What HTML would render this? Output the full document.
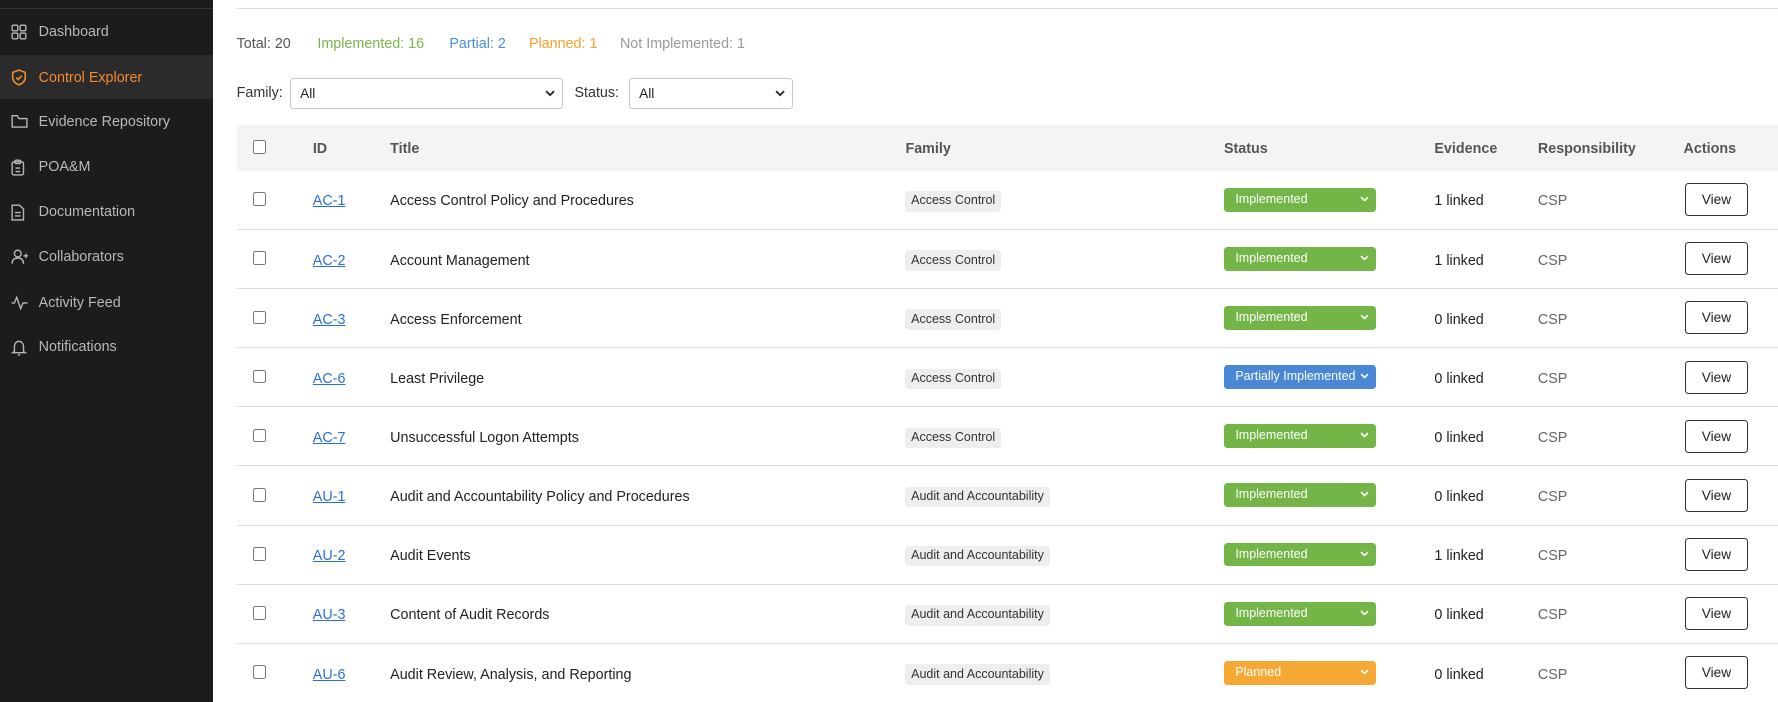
<!DOCTYPE html>
<html><head><meta charset="utf-8"><style>
*{box-sizing:border-box;margin:0;padding:0}
html,body{width:1778px;height:702px;overflow:hidden;background:#fff;font-family:"Liberation Sans",sans-serif}
#w{zoom:1.1375;width:1563px;height:618px;position:relative;overflow:hidden}
.sb{position:absolute;left:0;top:0;width:187px;height:618px;background:#1c1c1c}
.sb .tl{position:absolute;left:0;top:7px;width:187px;height:1px;background:#333}
.it{position:absolute;left:0;width:187px;height:39px;color:#b8b8b8;font-size:12.6px;line-height:41px;padding-left:34px}
.it svg{position:absolute;left:10px;top:13px}
.it.on{background:#2b2b2b;color:#f28a2e}
.a{position:absolute;white-space:nowrap}
.sel{position:absolute;height:27px;border:1px solid #c8c8c8;border-radius:3px;font-size:12px;line-height:25px;padding-left:8px;color:#222;background:#fff}
.sel svg{position:absolute;right:6px;top:9px}
.hd{position:absolute;left:208px;top:110px;width:1355px;height:40px;background:#f4f4f4}
.h{position:absolute;top:124px;font-size:12.6px;font-weight:bold;color:#555}
.row{position:absolute;left:208px;width:1355px;height:52px;border-bottom:1px solid #ddd}
.cb{position:absolute;left:14px;top:19px;width:12px;height:12px;border:1px solid #777;border-radius:2px;background:#fff}
.row .t{position:absolute;top:20px;font-size:12.6px;color:#222}
.id{left:67px;color:#2a6fd6!important;text-decoration:underline}
.bd{position:absolute;top:18px;left:588px;background:#eee;border-radius:3px;font-size:11px;color:#333;padding:2px 5px;line-height:14px}
.st{position:absolute;left:868px;top:15px;width:134px;height:21px;border-radius:3px;color:#fff;font-size:11px;line-height:20px;padding-left:10px}
.st svg{position:absolute;right:6px;top:7px}
.g{background:#74b548}.b{background:#4a88d6}.o{background:#f5a833}
.vw{position:absolute;left:1273px;top:11px;width:56px;height:29px;border:1px solid #333;border-radius:3px;font-size:12px;text-align:center;line-height:28px;color:#222}
</style></head><body><div id="w">
<div class="sb"><div class="tl"></div>
<div class="it" style="top:8px"><svg width="14" height="14" viewBox="0 0 14 14" fill="none" stroke="#b8b8b8" stroke-width="1.2"><rect x="1" y="1" width="5" height="5" rx="1"/><rect x="8" y="1" width="5" height="5" rx="1"/><rect x="1" y="8" width="5" height="5" rx="1"/><rect x="8" y="8" width="5" height="5" rx="1"/></svg>Dashboard</div>
<div class="it on" style="top:48px"><svg width="14" height="15" viewBox="0 0 14 15" fill="none" stroke="#f28a2e" stroke-width="1.4"><path d="M7 1L12.5 3V7.5C12.5 10.5 10 12.8 7 14C4 12.8 1.5 10.5 1.5 7.5V3Z"/><path d="M4.6 7.5L6.3 9.2L9.5 6"/></svg>Control Explorer</div>
<div class="it" style="top:87px"><svg width="15" height="13" viewBox="0 0 15 13" fill="none" stroke="#b8b8b8" stroke-width="1.2"><path d="M1 2.5V11.5H14V4H7L5.5 1.5H1Z"/></svg>Evidence Repository</div>
<div class="it" style="top:127px"><svg width="12" height="15" viewBox="0 0 12 15" fill="none" stroke="#b8b8b8" stroke-width="1.2"><rect x="1" y="2.5" width="10" height="11.5" rx="1.5"/><rect x="3.5" y="1" width="5" height="3" rx="1"/><path d="M4 8H8M4 11H8"/></svg>POA&amp;M</div>
<div class="it" style="top:166px"><svg width="12" height="15" viewBox="0 0 12 15" fill="none" stroke="#b8b8b8" stroke-width="1.2"><path d="M1 1H7.5L11 4.5V14H1Z"/><path d="M3.5 7.5H8.5M3.5 10.5H8.5"/></svg>Documentation</div>
<div class="it" style="top:206px"><svg width="16" height="14" viewBox="0 0 16 14" fill="none" stroke="#b8b8b8" stroke-width="1.2"><circle cx="6" cy="4" r="3"/><path d="M1 13C1 9.5 3 8 6 8S11 9.5 11 13M13 4V8M11 6H15"/></svg>Collaborators</div>
<div class="it" style="top:246px"><svg width="15" height="14" viewBox="0 0 15 14" fill="none" stroke="#b8b8b8" stroke-width="1.2"><path d="M0.5 7H3L5 2L8.5 12L10.5 7H14.5"/></svg>Activity Feed</div>
<div class="it" style="top:285px"><svg width="14" height="15" viewBox="0 0 14 15" fill="none" stroke="#b8b8b8" stroke-width="1.2"><path d="M3 11V6.5C3 4 4.8 2 7 2S11 4 11 6.5V11L12.5 12H1.5Z"/><path d="M6 14H8"/></svg>Notifications</div>
</div>
<div class="a" style="left:208px;top:7px;width:1355px;height:1px;background:#ddd"></div>
<div class="a" style="left:208px;top:32px;font-size:12.6px;color:#555">Total: 20</div>
<div class="a" style="left:279px;top:32px;font-size:12.6px;color:#7ab648">Implemented: 16</div>
<div class="a" style="left:395px;top:32px;font-size:12.6px;color:#4a90d9">Partial: 2</div>
<div class="a" style="left:465px;top:32px;font-size:12.6px;color:#f5a030">Planned: 1</div>
<div class="a" style="left:545px;top:32px;font-size:12.6px;color:#999">Not Implemented: 1</div>
<div class="a" style="left:208px;top:75px;font-size:12.6px;color:#333">Family:</div>
<div class="sel" style="left:255px;top:69px;width:240px;line-height:26px">All<svg width="9" height="6" viewBox="0 0 9 6" fill="none" stroke="#222" stroke-width="1.6"><path d="M1 1L4.5 4.5L8 1"/></svg></div>
<div class="a" style="left:505px;top:75px;font-size:12.6px;color:#333">Status:</div>
<div class="sel" style="left:553px;top:69px;width:144px;line-height:26px">All<svg width="9" height="6" viewBox="0 0 9 6" fill="none" stroke="#222" stroke-width="1.6"><path d="M1 1L4.5 4.5L8 1"/></svg></div>
<div class="hd"><div class="cb" style="top:13px"></div></div>
<div class="h" style="left:275px">ID</div><div class="h" style="left:343px">Title</div><div class="h" style="left:796px">Family</div><div class="h" style="left:1076px">Status</div><div class="h" style="left:1261px">Evidence</div><div class="h" style="left:1352px">Responsibility</div><div class="h" style="left:1480px">Actions</div>
<div class="row" style="top:150px"><div class="cb"></div><div class="t id">AC-1</div><div class="t" style="left:135px">Access Control Policy and Procedures</div><div class="bd">Access Control</div><div class="st g">Implemented<svg width="8" height="5" viewBox="0 0 8 5" fill="none" stroke="#fff" stroke-width="1.5"><path d="M1 1L4 4L7 1"/></svg></div><div class="t" style="left:1053px">1 linked</div><div class="t" style="left:1144px;color:#666">CSP</div><div class="vw">View</div></div>
<div class="row" style="top:202px"><div class="cb"></div><div class="t id">AC-2</div><div class="t" style="left:135px">Account Management</div><div class="bd">Access Control</div><div class="st g">Implemented<svg width="8" height="5" viewBox="0 0 8 5" fill="none" stroke="#fff" stroke-width="1.5"><path d="M1 1L4 4L7 1"/></svg></div><div class="t" style="left:1053px">1 linked</div><div class="t" style="left:1144px;color:#666">CSP</div><div class="vw">View</div></div>
<div class="row" style="top:254px"><div class="cb"></div><div class="t id">AC-3</div><div class="t" style="left:135px">Access Enforcement</div><div class="bd">Access Control</div><div class="st g">Implemented<svg width="8" height="5" viewBox="0 0 8 5" fill="none" stroke="#fff" stroke-width="1.5"><path d="M1 1L4 4L7 1"/></svg></div><div class="t" style="left:1053px">0 linked</div><div class="t" style="left:1144px;color:#666">CSP</div><div class="vw">View</div></div>
<div class="row" style="top:306px"><div class="cb"></div><div class="t id">AC-6</div><div class="t" style="left:135px">Least Privilege</div><div class="bd">Access Control</div><div class="st b">Partially Implemented<svg width="8" height="5" viewBox="0 0 8 5" fill="none" stroke="#fff" stroke-width="1.5"><path d="M1 1L4 4L7 1"/></svg></div><div class="t" style="left:1053px">0 linked</div><div class="t" style="left:1144px;color:#666">CSP</div><div class="vw">View</div></div>
<div class="row" style="top:358px"><div class="cb"></div><div class="t id">AC-7</div><div class="t" style="left:135px">Unsuccessful Logon Attempts</div><div class="bd">Access Control</div><div class="st g">Implemented<svg width="8" height="5" viewBox="0 0 8 5" fill="none" stroke="#fff" stroke-width="1.5"><path d="M1 1L4 4L7 1"/></svg></div><div class="t" style="left:1053px">0 linked</div><div class="t" style="left:1144px;color:#666">CSP</div><div class="vw">View</div></div>
<div class="row" style="top:410px"><div class="cb"></div><div class="t id">AU-1</div><div class="t" style="left:135px">Audit and Accountability Policy and Procedures</div><div class="bd">Audit and Accountability</div><div class="st g">Implemented<svg width="8" height="5" viewBox="0 0 8 5" fill="none" stroke="#fff" stroke-width="1.5"><path d="M1 1L4 4L7 1"/></svg></div><div class="t" style="left:1053px">0 linked</div><div class="t" style="left:1144px;color:#666">CSP</div><div class="vw">View</div></div>
<div class="row" style="top:462px"><div class="cb"></div><div class="t id">AU-2</div><div class="t" style="left:135px">Audit Events</div><div class="bd">Audit and Accountability</div><div class="st g">Implemented<svg width="8" height="5" viewBox="0 0 8 5" fill="none" stroke="#fff" stroke-width="1.5"><path d="M1 1L4 4L7 1"/></svg></div><div class="t" style="left:1053px">1 linked</div><div class="t" style="left:1144px;color:#666">CSP</div><div class="vw">View</div></div>
<div class="row" style="top:514px"><div class="cb"></div><div class="t id">AU-3</div><div class="t" style="left:135px">Content of Audit Records</div><div class="bd">Audit and Accountability</div><div class="st g">Implemented<svg width="8" height="5" viewBox="0 0 8 5" fill="none" stroke="#fff" stroke-width="1.5"><path d="M1 1L4 4L7 1"/></svg></div><div class="t" style="left:1053px">0 linked</div><div class="t" style="left:1144px;color:#666">CSP</div><div class="vw">View</div></div>
<div class="row" style="top:566px"><div class="cb"></div><div class="t id">AU-6</div><div class="t" style="left:135px">Audit Review, Analysis, and Reporting</div><div class="bd">Audit and Accountability</div><div class="st o">Planned<svg width="8" height="5" viewBox="0 0 8 5" fill="none" stroke="#fff" stroke-width="1.5"><path d="M1 1L4 4L7 1"/></svg></div><div class="t" style="left:1053px">0 linked</div><div class="t" style="left:1144px;color:#666">CSP</div><div class="vw">View</div></div>
</div></body></html>
